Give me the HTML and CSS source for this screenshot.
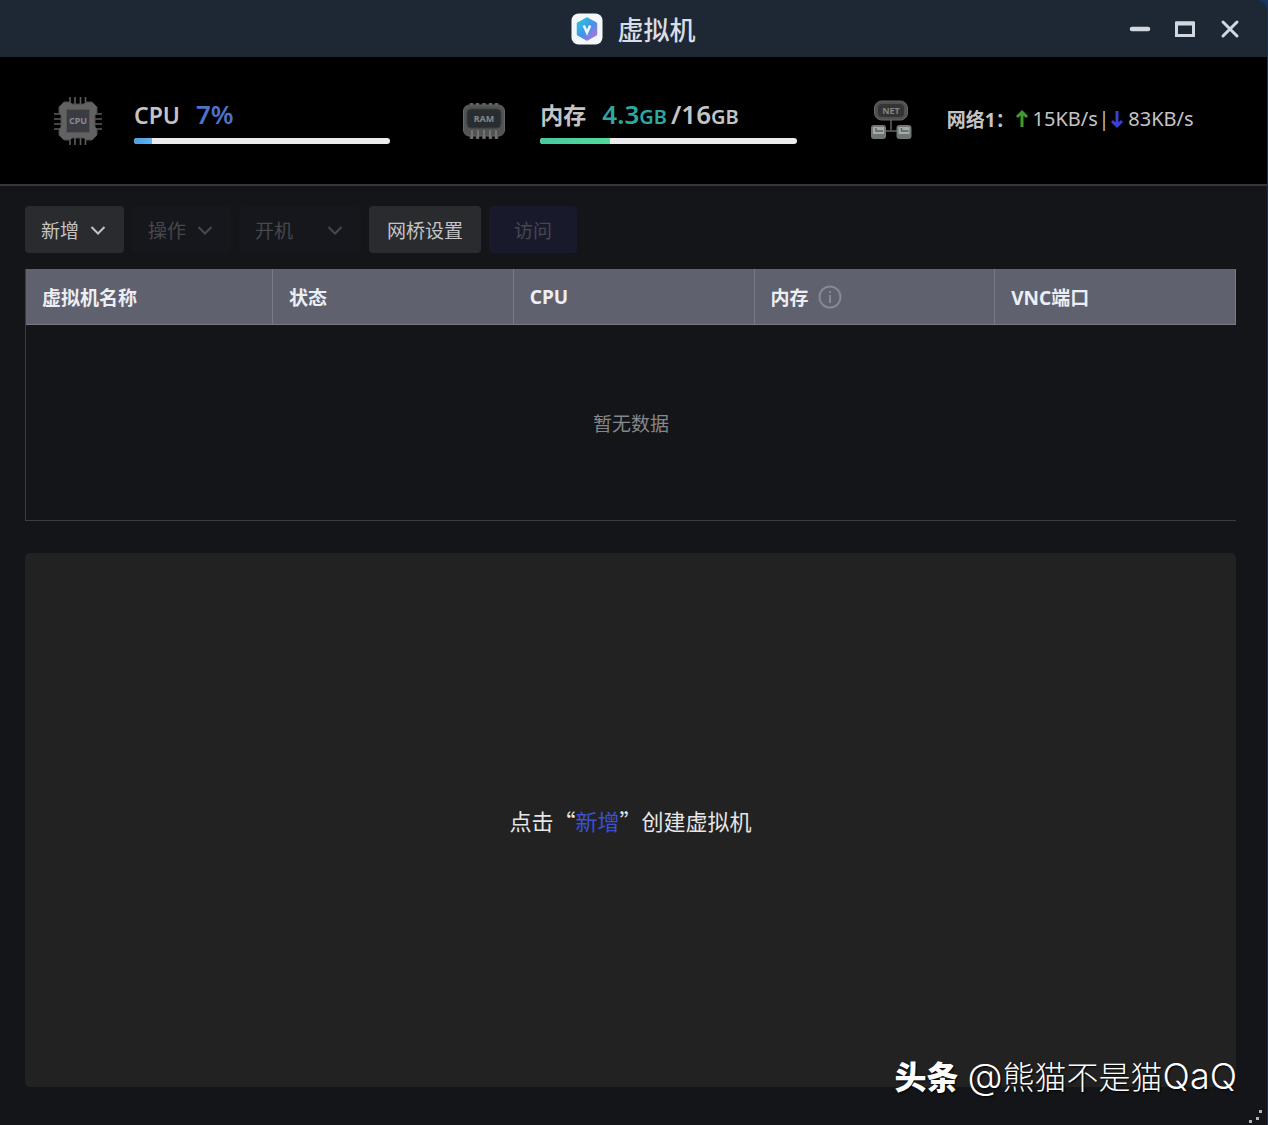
FILE: index.html
```html
<!DOCTYPE html>
<html lang="zh-CN">
<head>
    <meta charset="UTF-8">
    <meta name="viewport" content="width=device-width, initial-scale=1.0">
    <title>虚拟机</title>
    <link rel="stylesheet" href="styles.css">
</head>
<body>
    <div class="window">
        <header class="titlebar">
            <div class="title">
                <svg class="logo" viewBox="0 0 32 32" aria-hidden="true">
                    <defs>
                        <linearGradient id="hex" x1="0" y1="0" x2="1" y2="1">
                            <stop offset="0.2" stop-color="#32b5e2"/>
                            <stop offset="0.55" stop-color="#4b8fe6"/>
                            <stop offset="0.9" stop-color="#a678dc"/>
                        </linearGradient>
                    </defs>
                    <rect x="0.5" y="0.5" width="31" height="31" rx="7" fill="#f4f8fb"/>
                    <path d="M16 5.5l9 5.2v10.6l-9 5.2-9-5.2V10.7z" fill="url(#hex)" stroke="url(#hex)" stroke-width="2.5" stroke-linejoin="round"/>
                    <path d="M12.8 12.5l3.2 7 3.2-7" fill="none" stroke="#e8f6ff" stroke-width="2.6"/>
                </svg>
                <h1>虚拟机</h1>
            </div>
            <div class="controls">
                <button type="button" aria-label="最小化">
                    <svg viewBox="0 0 22 22"><path d="M3 11h16" stroke-width="4.5" stroke-linecap="round"/></svg>
                </button>
                <button type="button" aria-label="最大化">
                    <svg viewBox="0 0 22 22"><path d="M2.5 5h17v12.5h-17z" stroke-width="3"/><path d="M2 5.5h18" stroke-width="4"/></svg>
                </button>
                <button type="button" aria-label="关闭">
                    <svg viewBox="0 0 22 22"><path d="M4 4l14 14M18 4L4 18" stroke-width="3" stroke-linecap="round"/></svg>
                </button>
            </div>
        </header>

        <section class="stats">
            <div class="stat">
                <svg class="stat-icon" viewBox="0 0 48 48" aria-hidden="true">
                    <path d="M16 0v48M21 0v48M26.5 0v48M31.5 0v48M0 17h48M0 22h48M0 27h48M0 32h48" stroke="#5c5c5c" stroke-width="1.6"/>
                    <path d="M10 5h6l2 2h12l2-2h6l5 5v6l-2 2v12l2 2v6l-5 5h-6l-2-2H18l-2 2h-6l-5-5v-6l2-2V18l-2-2v-6z" fill="#626262" stroke="#4c4c4c"/>
                    <rect x="12.5" y="12.5" width="23" height="23" rx="1" fill="#3b3b42" stroke="#555"/>
                    <text x="24" y="27" font-size="9" font-weight="bold" text-anchor="middle" fill="#88889a">CPU</text>
                </svg>
                <div class="stat-body">
                    <div class="stat-line"><span class="name">CPU</span><span class="cpu-value">7%</span></div>
                    <div class="bar"><div class="bar-fill cpu-fill" style="width: 7%"></div></div>
                </div>
            </div>
            <div class="stat">
                <svg class="stat-icon" viewBox="0 0 48 48" aria-hidden="true">
                    <path d="M11.5 6v36M17.5 6v36M24 6v36M30.5 6v36M36.5 6v36" stroke="#626262" stroke-width="3.5"/>
                    <rect x="3.5" y="8" width="41" height="31" rx="6" fill="#525353" stroke="#676767"/>
                    <path d="M12 33v8M18 33v8M24 33v8M30 33v8M36 33v8" stroke="#727272" stroke-width="2"/>
                    <rect x="7" y="12" width="34" height="19" rx="4" fill="#292d30" stroke="#3b4042"/>
                    <text x="24" y="25" font-size="9" font-weight="bold" text-anchor="middle" fill="#83888c">RAM</text>
                </svg>
                <div class="stat-body">
                    <div class="stat-line"><span class="name">内存</span><span><span class="ram-value">4.3<small>GB</small></span>/16<small>GB</small></span></div>
                    <div class="bar"><div class="bar-fill ram-fill" style="width: 27%"></div></div>
                </div>
            </div>
            <div class="stat">
                <svg class="stat-icon" viewBox="0 0 48 48" aria-hidden="true">
                    <path d="M24 22v12M17 34h14" fill="none" stroke="#4a4a4a" stroke-width="2"/>
                    <rect x="7.5" y="4" width="33" height="19" rx="7" fill="#505050" stroke="#646464"/>
                    <rect x="11" y="7" width="26" height="13" rx="4" fill="#343434"/>
                    <text x="24" y="17" font-size="9" font-weight="bold" text-anchor="middle" fill="#838383">NET</text>
                    <rect x="4" y="28" width="15" height="14" rx="3" fill="#707673"/>
                    <rect x="29.5" y="28" width="15" height="14" rx="3" fill="#707673"/>
                    <path d="M6 30h11v7H6zM31.5 30h11v7h-11z" fill="#a4aaa7"/>
                    <path d="M9 31v3h7M34.5 31v3h7" fill="none" stroke="#5c605e" stroke-width="1.4"/>
                </svg>
                <div class="network">
                    <b>网络1：</b>
                    <svg class="arrow up" viewBox="0 0 14 20" aria-label="上传"><path d="M7 18V3M2 8l5-5 5 5"/></svg>
                    <span class="speed">15KB/s</span>
                    <span class="divider">|</span>
                    <svg class="arrow down" viewBox="0 0 14 20" aria-label="下载"><path d="M7 2v15M2 12l5 5 5-5"/></svg>
                    <span class="speed">83KB/s</span>
                </div>
            </div>
        </section>

        <main class="content">
            <div class="toolbar">
                <button type="button" class="btn">新增<svg class="chevron" viewBox="0 0 16 16"><path d="M1.5 5L8 11.5 14.5 5"/></svg></button>
                <button type="button" class="btn" disabled>操作<svg class="chevron" viewBox="0 0 16 16"><path d="M1.5 5L8 11.5 14.5 5"/></svg></button>
                <button type="button" class="btn btn-power" disabled>开机<svg class="chevron" viewBox="0 0 16 16"><path d="M1.5 5L8 11.5 14.5 5"/></svg></button>
                <button type="button" class="btn btn-bridge">网桥设置</button>
                <button type="button" class="btn btn-visit" disabled>访问</button>
            </div>

            <table class="vm-table">
                <thead>
                    <tr>
                        <th>虚拟机名称</th>
                        <th>状态</th>
                        <th>CPU</th>
                        <th>
                            <span class="with-info">内存
                                <svg class="info" viewBox="0 0 24 24"><circle cx="12" cy="12" r="10.5"/><path d="M12 10v8M12 6v2"/></svg>
                            </span>
                        </th>
                        <th>VNC端口</th>
                    </tr>
                </thead>
                <tbody>
                    <tr>
                        <td colspan="5">暂无数据</td>
                    </tr>
                </tbody>
            </table>

            <section class="detail">
                <p>点击“<a href="#">新增</a>”创建虚拟机</p>
            </section>
        </main>

        <div class="watermark"><b>头条</b> <span class="latin">@</span>熊猫不是猫<span class="latin">QaQ</span></div>
        <svg class="grip" viewBox="0 0 16 16" aria-hidden="true">
            <path d="M11 1h3v3h-3zM8 8h3v3H8zM1 11h3v3H1z"/>
        </svg>
    </div>
</body>
</html>
```

FILE: styles.css
```css
* {
    box-sizing: border-box;
}
body {
    margin: 0;
    background: #17345e;
    color: #c4c4c6;
    font-family: "Noto Sans", "Noto Sans CJK SC", sans-serif;
    font-size: 19px;
}
button {
    font: inherit;
    color: inherit;
    border: none;
    cursor: pointer;
}
.window {
    position: relative;
    display: flex;
    flex-direction: column;
    min-height: 100vh;
    margin-right: 1px;
    background: #131518;
    border-radius: 0 12px 0 0;
    overflow: hidden;
}

/* title bar */
.titlebar {
    display: grid;
    grid-template-columns: 1fr auto 1fr;
    align-items: center;
    height: 57px;
    padding: 0 26px;
    background: #1e2835;
}
.title {
    grid-column: 2;
    display: flex;
    align-items: center;
    gap: 14px;
}
.title h1 {
    margin: 0;
    font-family: "Noto Sans CJK SC", sans-serif;
    font-size: 26px;
    line-height: 32px;
    font-weight: 500;
    color: #d9dde5;
}
.logo {
    width: 32px;
    height: 32px;
}
.controls {
    display: flex;
    justify-content: flex-end;
    gap: 23px;
}
.controls button {
    display: flex;
    padding: 0;
    background: none;
}
.controls svg {
    width: 22px;
    height: 22px;
    fill: none;
    stroke: #d3d7e0;
}

/* resource usage */
.stats {
    display: grid;
    grid-template-columns: repeat(3, 1fr);
    align-items: center;
    height: 129px;
    padding: 0 24px;
    background: #000;
    border-bottom: 2px solid #35373a;
}
.stat {
    display: flex;
    align-items: center;
    gap: 32px;
    padding: 0 40px 0 30px;
}
.stat:last-child {
    padding-right: 0;
}
.stat-icon {
    flex: none;
    width: 48px;
    height: 48px;
}
.stat-body {
    flex: 1;
}
.stat-line {
    display: flex;
    align-items: baseline;
    gap: 16px;
    height: 32px;
    margin-bottom: 8px;
    font-size: 26px;
    line-height: 32px;
    font-weight: 600;
    white-space: nowrap;
}
.stat-line .name {
    font-size: 23px;
}
.stat-line small {
    font-size: 20px;
}
.cpu-value {
    color: #4e72c4;
}
.ram-value {
    margin-right: 4px;
    color: #2ea7a1;
}
.bar {
    height: 6px;
    border-radius: 3px;
    background: #ececee;
    overflow: hidden;
}
.bar-fill {
    height: 100%;
}
.cpu-fill {
    background: linear-gradient(to right, #4b9ee0, #5fb4f0);
}
.ram-fill {
    background: linear-gradient(to right, #46c9a4, #50dc98);
}
.network {
    display: flex;
    align-items: center;
    padding-bottom: 4px;
    white-space: nowrap;
}
.speed {
    font-size: 20px;
}
.arrow {
    width: 14px;
    height: 20px;
    margin-right: 4px;
    fill: none;
    stroke-width: 3;
}
.up {
    stroke: #3f9c2c;
}
.down {
    stroke: #3c3fd0;
}
.divider {
    margin: 0 1px;
}

/* content */
.content {
    flex: 1;
    display: flex;
    flex-direction: column;
    padding: 20px 31px 38px 25px;
}
.toolbar {
    display: flex;
    gap: 8px;
    margin-bottom: 16px;
}
.btn {
    display: flex;
    align-items: center;
    justify-content: space-between;
    gap: 11px;
    height: 47px;
    padding: 0 18px 0 16px;
    border-radius: 4px;
    background: #292b2e;
}
.btn:disabled {
    background: #16171c;
    color: #47484d;
    cursor: default;
}
.btn-power {
    min-width: 122px;
}
.btn-bridge {
    padding: 0 18px;
}
.btn.btn-visit {
    padding: 0 25px;
    background: #181a2b;
}
.chevron {
    width: 16px;
    height: 16px;
    fill: none;
    stroke: currentColor;
    stroke-width: 2;
}
.vm-table {
    width: 100%;
    table-layout: fixed;
    border-collapse: separate;
    border-spacing: 0;
    border-left: 1px solid #3b3d41;
    border-bottom: 1px solid #3b3d41;
}
.vm-table th {
    height: 56px;
    padding: 0 16px;
    background: #5f616e;
    border-right: 1px solid #777986;
    border-bottom: 1px solid #777986;
    color: #eceef4;
    font-weight: bold;
    text-align: left;
}
.vm-table th:first-child {
    width: 247px;
}
.vm-table td {
    height: 195px;
    padding: 0;
    color: #85878a;
    text-align: center;
}
.with-info {
    display: flex;
    align-items: center;
    gap: 9px;
}
.info {
    width: 24px;
    height: 24px;
    fill: none;
    stroke: #868894;
    stroke-width: 2;
}
.detail {
    flex: 1;
    display: flex;
    align-items: center;
    justify-content: center;
    margin-top: 32px;
    border-radius: 5px;
    background: #222;
}
.detail p {
    margin: 0;
    font-family: "Noto Sans CJK SC", sans-serif;
    font-size: 22px;
    color: #e6e6e6;
}
.detail a {
    color: #3c50d2;
    text-decoration: none;
}

/* overlays */
.watermark {
    position: absolute;
    right: 30px;
    bottom: 24px;
    font-family: Inter, "Noto Sans CJK SC", sans-serif;
    font-size: 32px;
    line-height: 46px;
    font-weight: 300;
    color: #fff;
    text-shadow: 1px 1px 2px #000;
}
.watermark b {
    font-weight: 900;
}
.watermark .latin {
    font-size: 36px;
}
.grip {
    position: absolute;
    right: 3px;
    bottom: 0;
    width: 16px;
    height: 16px;
    fill: #b4b4b4;
}
```
